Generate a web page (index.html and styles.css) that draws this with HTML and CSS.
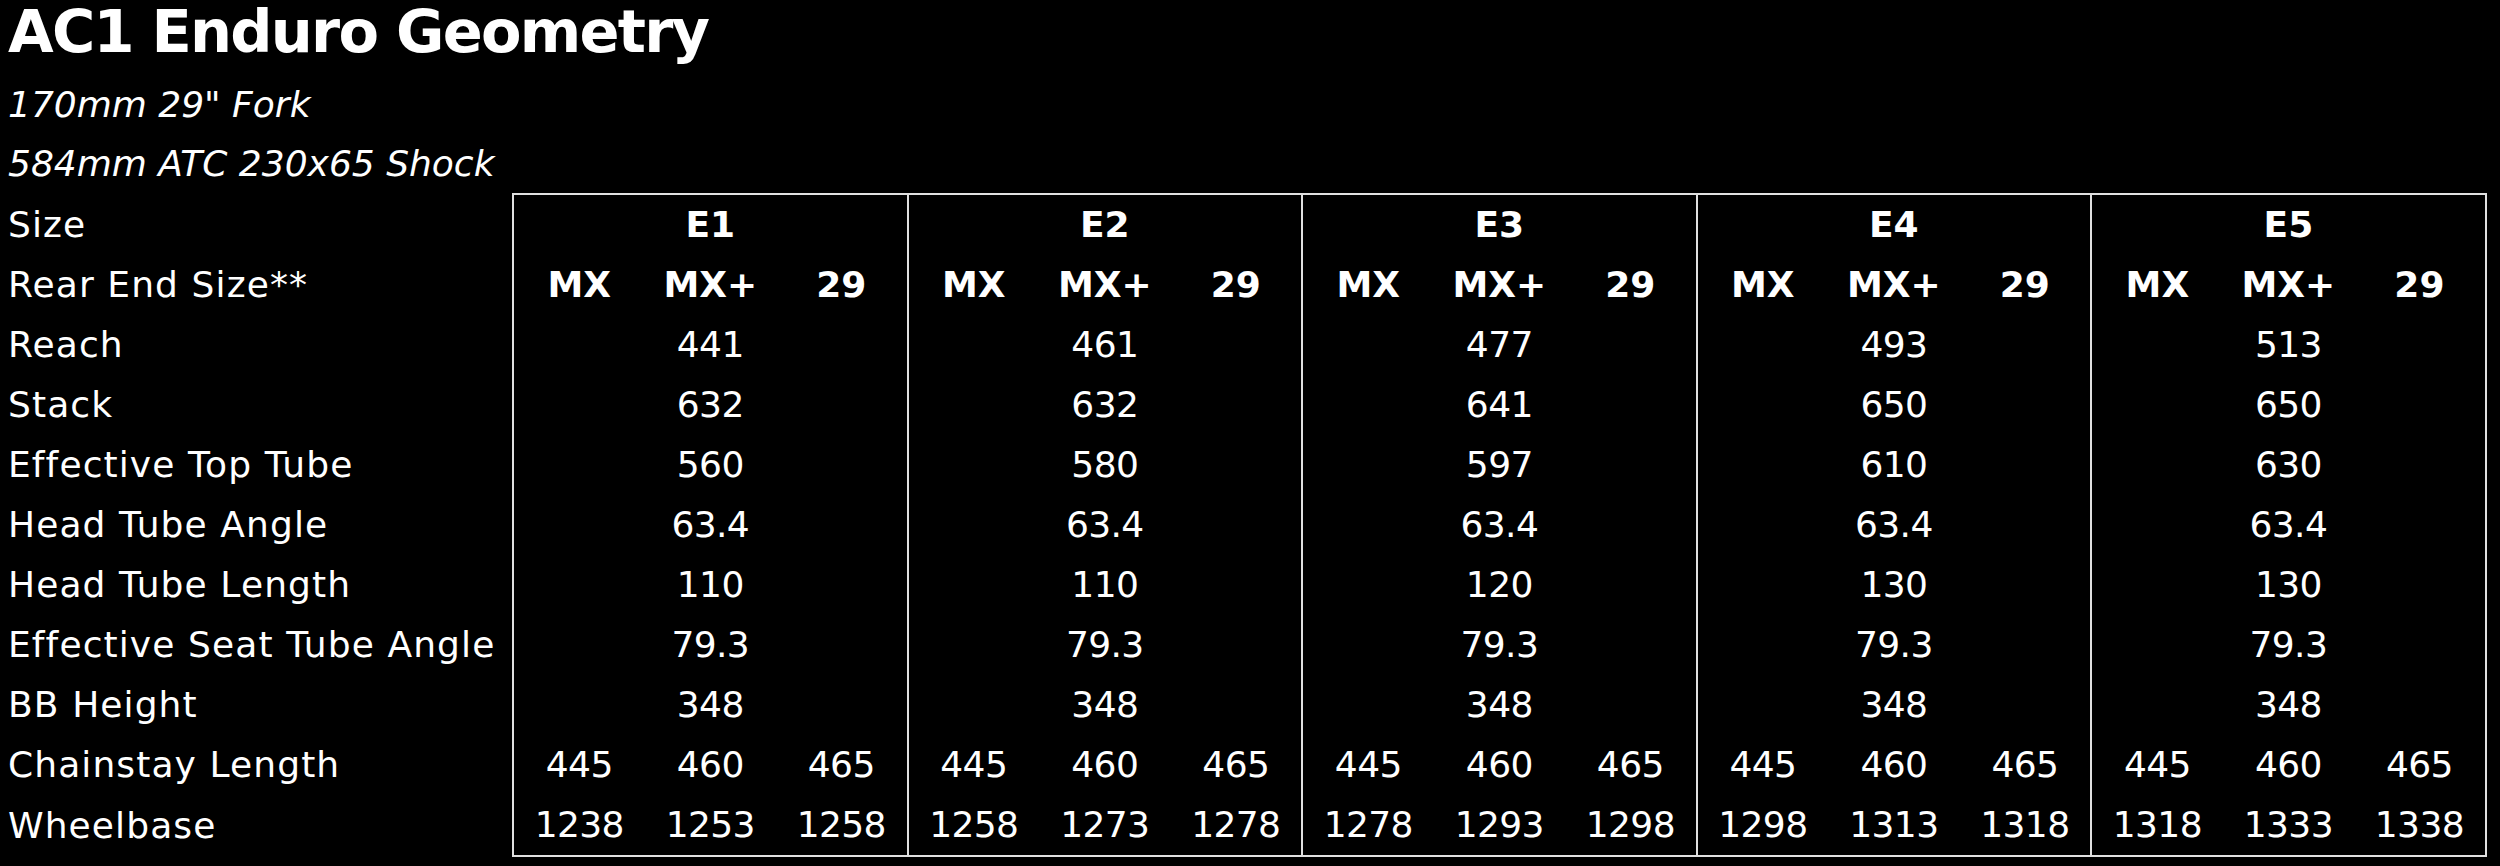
FILE: index.html
```html
<!DOCTYPE html>
<html lang="en">
<head>
<meta charset="utf-8">
<title>AC1 Enduro Geometry</title>
<link rel="stylesheet" href="styles.css">
</head>
<body>
<h1 class="title">AC1 Enduro Geometry</h1>
<p class="sub">170mm 29" Fork</p>
<p class="sub">584mm ATC 230x65 Shock</p>
<table class="geo">
  <colgroup class="label-group"><col class="label-col"></colgroup>
  <colgroup class="size-group"><col class="val-col"><col class="val-col"><col class="val-col"></colgroup>
  <colgroup class="size-group"><col class="val-col"><col class="val-col"><col class="val-col"></colgroup>
  <colgroup class="size-group"><col class="val-col"><col class="val-col"><col class="val-col"></colgroup>
  <colgroup class="size-group"><col class="val-col"><col class="val-col"><col class="val-col"></colgroup>
  <colgroup class="size-group"><col class="val-col"><col class="val-col"><col class="val-col"></colgroup>
  <thead>
    <tr>
      <th class="label">Size</th>
      <th class="head" colspan="3">E1</th>
      <th class="head" colspan="3">E2</th>
      <th class="head" colspan="3">E3</th>
      <th class="head" colspan="3">E4</th>
      <th class="head" colspan="3">E5</th>
    </tr>
    <tr>
      <th class="label">Rear End Size**</th>
      <th class="head">MX</th><th class="head">MX+</th><th class="head">29</th>
      <th class="head">MX</th><th class="head">MX+</th><th class="head">29</th>
      <th class="head">MX</th><th class="head">MX+</th><th class="head">29</th>
      <th class="head">MX</th><th class="head">MX+</th><th class="head">29</th>
      <th class="head">MX</th><th class="head">MX+</th><th class="head">29</th>
    </tr>
  </thead>
  <tbody>
    <tr><th class="label">Reach</th><td colspan="3">441</td><td colspan="3">461</td><td colspan="3">477</td><td colspan="3">493</td><td colspan="3">513</td></tr>
    <tr><th class="label">Stack</th><td colspan="3">632</td><td colspan="3">632</td><td colspan="3">641</td><td colspan="3">650</td><td colspan="3">650</td></tr>
    <tr><th class="label">Effective Top Tube</th><td colspan="3">560</td><td colspan="3">580</td><td colspan="3">597</td><td colspan="3">610</td><td colspan="3">630</td></tr>
    <tr><th class="label">Head Tube Angle</th><td colspan="3">63.4</td><td colspan="3">63.4</td><td colspan="3">63.4</td><td colspan="3">63.4</td><td colspan="3">63.4</td></tr>
    <tr><th class="label">Head Tube Length</th><td colspan="3">110</td><td colspan="3">110</td><td colspan="3">120</td><td colspan="3">130</td><td colspan="3">130</td></tr>
    <tr><th class="label">Effective Seat Tube Angle</th><td colspan="3">79.3</td><td colspan="3">79.3</td><td colspan="3">79.3</td><td colspan="3">79.3</td><td colspan="3">79.3</td></tr>
    <tr><th class="label">BB Height</th><td colspan="3">348</td><td colspan="3">348</td><td colspan="3">348</td><td colspan="3">348</td><td colspan="3">348</td></tr>
    <tr><th class="label">Chainstay Length</th>
      <td>445</td><td>460</td><td>465</td>
      <td>445</td><td>460</td><td>465</td>
      <td>445</td><td>460</td><td>465</td>
      <td>445</td><td>460</td><td>465</td>
      <td>445</td><td>460</td><td>465</td>
    </tr>
    <tr><th class="label">Wheelbase</th>
      <td>1238</td><td>1253</td><td>1258</td>
      <td>1258</td><td>1273</td><td>1278</td>
      <td>1278</td><td>1293</td><td>1298</td>
      <td>1298</td><td>1313</td><td>1318</td>
      <td>1318</td><td>1333</td><td>1338</td>
    </tr>
  </tbody>
</table>
</body>
</html>
```

FILE: styles.css
```css
html, body {
  background: #000;
}

body {
  margin: 0;
  padding: 0 8px;
  color: #fff;
  font-family: "DejaVu Sans", "Liberation Sans", sans-serif;
}

.title {
  margin: 0 0 12px 0;
  font-size: 59px;
  line-height: 63px;
  font-weight: 700;
  letter-spacing: -1.75px;
}

.sub {
  margin: 0;
  font-size: 36px;
  line-height: 59px;
  font-style: italic;
  font-weight: 400;
}

.geo {
  border-collapse: collapse;
  table-layout: fixed;
  width: 2478px;
  font-size: 36px;
}

.label-col {
  width: 505px;
}

.val-col {
  width: 131.5px;
}

.size-group {
  border: 2px solid #e0e0e0;
}

.geo th,
.geo td {
  padding: 0;
  line-height: 60px;
  height: 60px;
  vertical-align: middle;
  white-space: nowrap;
}

.geo .label {
  text-align: left;
  font-weight: 400;
  letter-spacing: 1.1px;
}

.geo .head {
  text-align: center;
  font-weight: 700;
}

.geo td {
  text-align: center;
  font-weight: 400;
  letter-spacing: -0.6px;
}
```
